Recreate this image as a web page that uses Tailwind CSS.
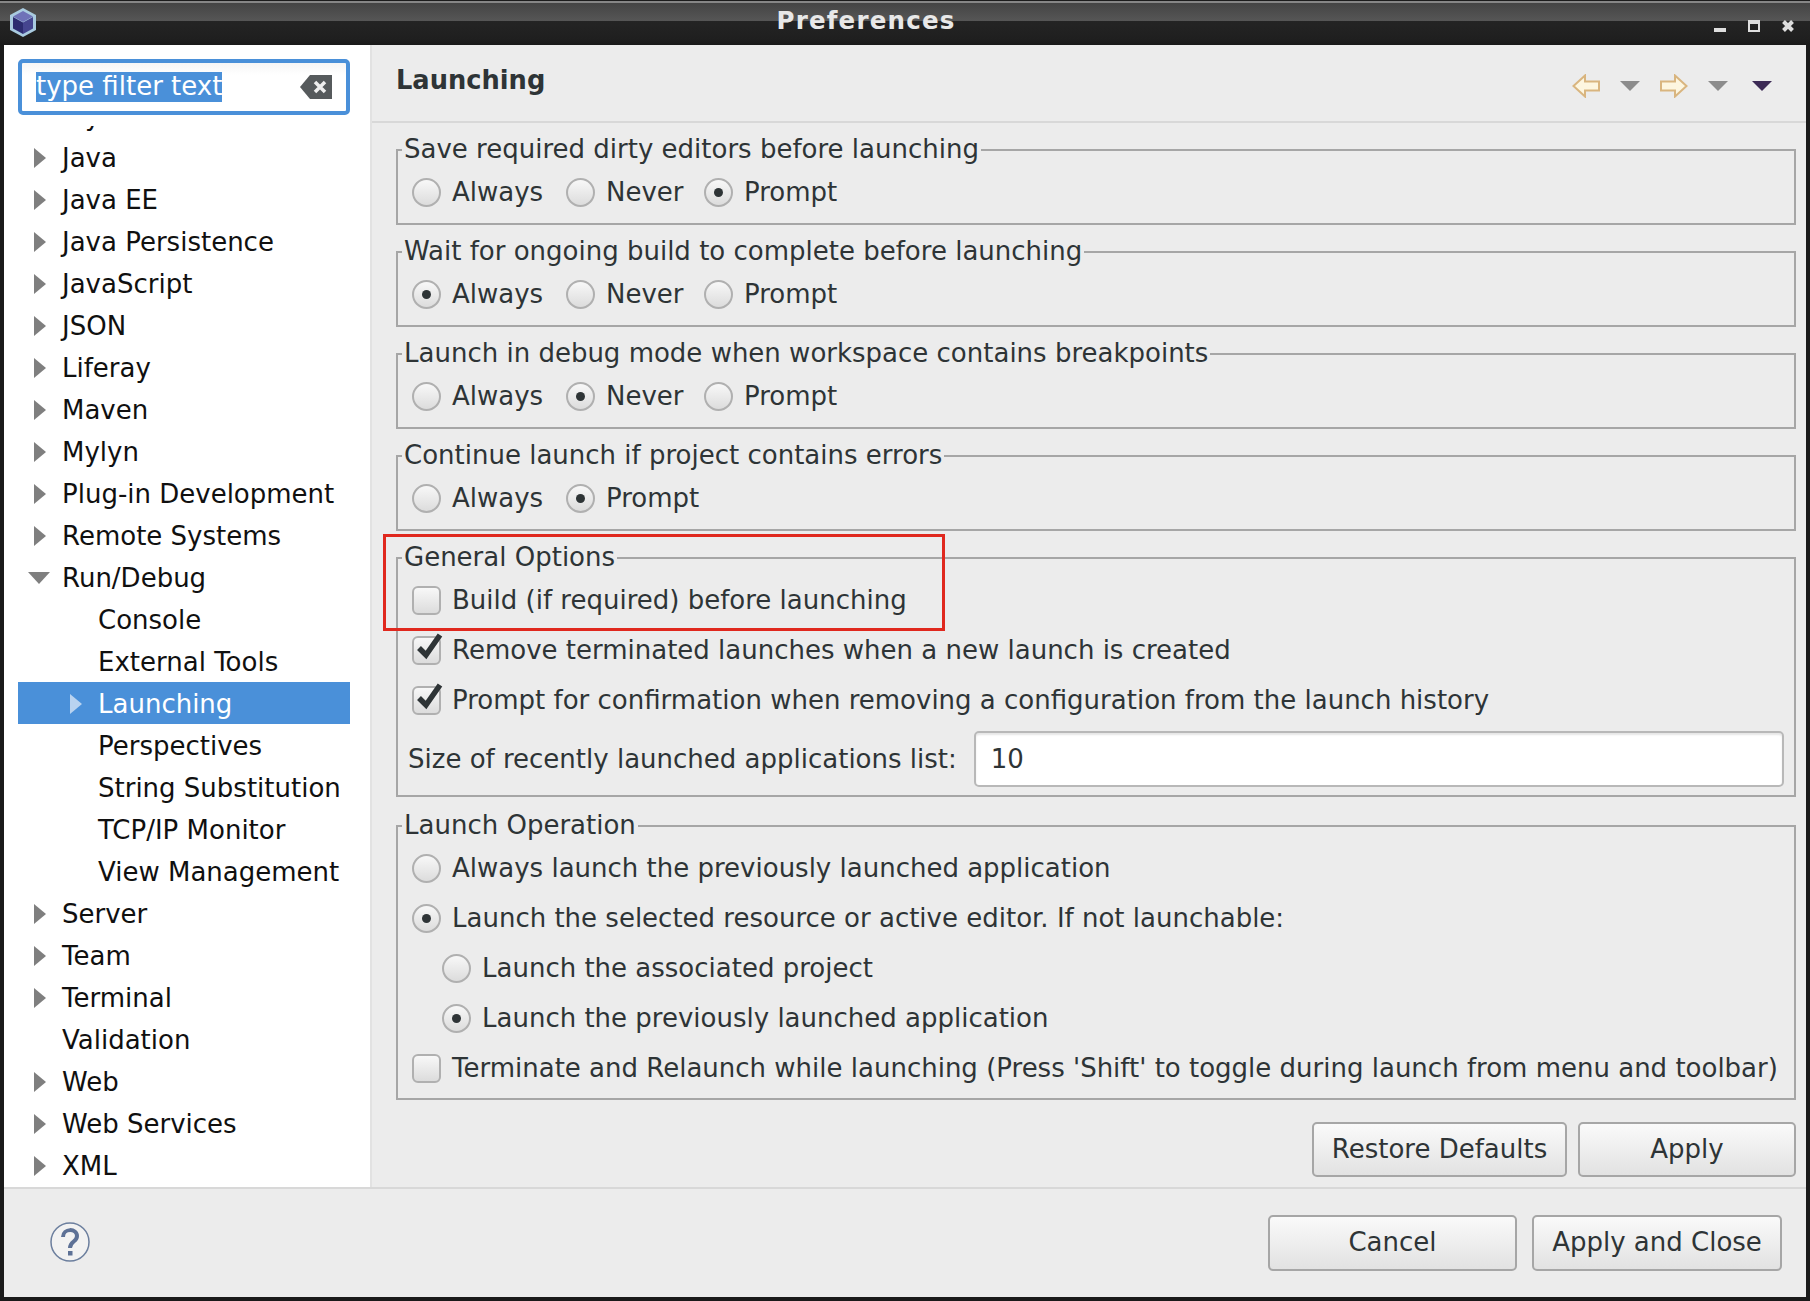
<!DOCTYPE html>
<html lang="en">
<head>
    <meta charset="UTF-8">
    <title>Preferences</title>
    <script src="https://cdn.jsdelivr.net/npm/@tailwindcss/browser@4"></script>
</head>
<body class="bg-[#1a1a1a] font-['DejaVu_Sans',sans-serif] text-[26px] text-[#2e3436] overflow-hidden">
<div class="w-[1810px] h-[1301px] flex flex-col relative">

    <!-- title bar -->
    <div class="h-[45px] grid grid-cols-[1fr_auto_1fr] items-center bg-[linear-gradient(to_bottom,#1c1c1c_0,#1c1c1c_1px,#868686_1px,#868686_3px,#444444_3px,#565656_21px,#242424_21px,#1f1f1f_39px,#191919_45px)]">
        <svg class="ml-[9px]" width="28" height="31" viewBox="0 0 28 31">
            <path d="M14 1 L27 8 V23 L14 30 L1 23 V8 Z" fill="#a9cbe0"/>
            <path d="M14 4 L24 9.5 L14 15 L4 9.5 Z" fill="#6f72b8"/>
            <path d="M4 10 L14 15.5 V27 L4 21.5 Z" fill="#2c2c70"/>
            <path d="M24 10 L14 15.5 V27 L24 21.5 Z" fill="#45458f"/>
        </svg>
        <div class="font-bold text-[24.5px] text-[#e8e8e8] tracking-[1.2px] leading-none -mt-[3px] mr-[78px]">Preferences</div>
        <div class="flex justify-end items-start gap-[22px] pr-[16px] pt-[7px]">
            <div class="w-[12px] h-[12px] flex items-end"><div class="w-[12px] h-[4px] bg-[#dedede]"></div></div>
            <div class="w-[12px] h-[12px] border-2 border-t-[4px] border-[#dedede]"></div>
            <svg width="12" height="12" viewBox="0 0 12 12"><path d="M1.5 1.5 L10.5 10.5 M10.5 1.5 L1.5 10.5" stroke="#dedede" stroke-width="4"/></svg>
        </div>
    </div>

    <div class="flex-1 mx-[4px] flex flex-col bg-[#ececec]">
        <div class="h-[1142px] flex">

            <!-- sidebar -->
            <div class="w-[366px] bg-white flex flex-col text-[#101010]">
                <div class="h-[81px] shrink-0 pl-[14px] pt-[14px]">
                    <div class="w-[332px] h-[56px] border-[4px] border-[#4a90d9] rounded-[5px] bg-linear-to-b from-[#f6f6f6] to-white to-[25%] flex items-center pl-[14px] pr-[14px] justify-between">
                        <span class="bg-[#4a90d9] text-white h-[30px] leading-[29px]">type filter text</span>
                        <svg width="32" height="24" viewBox="0 0 32 24"><path d="M0 12 L10 0 H32 V24 H10 Z" fill="#565a5c"/><path d="M15 7 L25 17 M25 7 L15 17" stroke="#eeeeee" stroke-width="3.5"/></svg>
                    </div>
                </div>
                <div class="flex-1 overflow-hidden pl-[14px] pr-[20px]">
                    <div class="-mt-[32px]">
                        <div class="h-[42px] pt-[2px] flex items-center pl-[16px]"><i class="w-[12px] mr-[16px] h-0 border-y-[10px] border-l-[12px] border-y-transparent border-l-[#7f7f7f]"></i>Ivy</div>
                        <div class="h-[42px] pt-[2px] flex items-center pl-[16px]"><i class="w-[12px] mr-[16px] h-0 border-y-[10px] border-l-[12px] border-y-transparent border-l-[#7f7f7f]"></i>Java</div>
                        <div class="h-[42px] pt-[2px] flex items-center pl-[16px]"><i class="w-[12px] mr-[16px] h-0 border-y-[10px] border-l-[12px] border-y-transparent border-l-[#7f7f7f]"></i>Java EE</div>
                        <div class="h-[42px] pt-[2px] flex items-center pl-[16px]"><i class="w-[12px] mr-[16px] h-0 border-y-[10px] border-l-[12px] border-y-transparent border-l-[#7f7f7f]"></i>Java Persistence</div>
                        <div class="h-[42px] pt-[2px] flex items-center pl-[16px]"><i class="w-[12px] mr-[16px] h-0 border-y-[10px] border-l-[12px] border-y-transparent border-l-[#7f7f7f]"></i>JavaScript</div>
                        <div class="h-[42px] pt-[2px] flex items-center pl-[16px]"><i class="w-[12px] mr-[16px] h-0 border-y-[10px] border-l-[12px] border-y-transparent border-l-[#7f7f7f]"></i>JSON</div>
                        <div class="h-[42px] pt-[2px] flex items-center pl-[16px]"><i class="w-[12px] mr-[16px] h-0 border-y-[10px] border-l-[12px] border-y-transparent border-l-[#7f7f7f]"></i>Liferay</div>
                        <div class="h-[42px] pt-[2px] flex items-center pl-[16px]"><i class="w-[12px] mr-[16px] h-0 border-y-[10px] border-l-[12px] border-y-transparent border-l-[#7f7f7f]"></i>Maven</div>
                        <div class="h-[42px] pt-[2px] flex items-center pl-[16px]"><i class="w-[12px] mr-[16px] h-0 border-y-[10px] border-l-[12px] border-y-transparent border-l-[#7f7f7f]"></i>Mylyn</div>
                        <div class="h-[42px] pt-[2px] flex items-center pl-[16px]"><i class="w-[12px] mr-[16px] h-0 border-y-[10px] border-l-[12px] border-y-transparent border-l-[#7f7f7f]"></i>Plug-in Development</div>
                        <div class="h-[42px] pt-[2px] flex items-center pl-[16px]"><i class="w-[12px] mr-[16px] h-0 border-y-[10px] border-l-[12px] border-y-transparent border-l-[#7f7f7f]"></i>Remote Systems</div>
                        <div class="h-[42px] pt-[2px] flex items-center pl-[10px]"><i class="w-[22px] mr-[12px] h-0 border-x-[11px] border-t-[12px] border-x-transparent border-t-[#7f7f7f]"></i>Run/Debug</div>
                        <div class="h-[42px] pt-[2px] flex items-center pl-[80px]">Console</div>
                        <div class="h-[42px] pt-[2px] flex items-center pl-[80px]">External Tools</div>
                        <div class="h-[42px] pt-[2px] flex items-center pl-[52px] bg-[#4a90d9] text-white"><i class="w-[12px] mr-[16px] h-0 border-y-[10px] border-l-[12px] border-y-transparent border-l-[#b9d3f0]"></i>Launching</div>
                        <div class="h-[42px] pt-[2px] flex items-center pl-[80px]">Perspectives</div>
                        <div class="h-[42px] pt-[2px] flex items-center pl-[80px]">String Substitution</div>
                        <div class="h-[42px] pt-[2px] flex items-center pl-[80px]">TCP/IP Monitor</div>
                        <div class="h-[42px] pt-[2px] flex items-center pl-[80px]">View Management</div>
                        <div class="h-[42px] pt-[2px] flex items-center pl-[16px]"><i class="w-[12px] mr-[16px] h-0 border-y-[10px] border-l-[12px] border-y-transparent border-l-[#7f7f7f]"></i>Server</div>
                        <div class="h-[42px] pt-[2px] flex items-center pl-[16px]"><i class="w-[12px] mr-[16px] h-0 border-y-[10px] border-l-[12px] border-y-transparent border-l-[#7f7f7f]"></i>Team</div>
                        <div class="h-[42px] pt-[2px] flex items-center pl-[16px]"><i class="w-[12px] mr-[16px] h-0 border-y-[10px] border-l-[12px] border-y-transparent border-l-[#7f7f7f]"></i>Terminal</div>
                        <div class="h-[42px] pt-[2px] flex items-center pl-[44px]">Validation</div>
                        <div class="h-[42px] pt-[2px] flex items-center pl-[16px]"><i class="w-[12px] mr-[16px] h-0 border-y-[10px] border-l-[12px] border-y-transparent border-l-[#7f7f7f]"></i>Web</div>
                        <div class="h-[42px] pt-[2px] flex items-center pl-[16px]"><i class="w-[12px] mr-[16px] h-0 border-y-[10px] border-l-[12px] border-y-transparent border-l-[#7f7f7f]"></i>Web Services</div>
                        <div class="h-[42px] pt-[2px] flex items-center pl-[16px]"><i class="w-[12px] mr-[16px] h-0 border-y-[10px] border-l-[12px] border-y-transparent border-l-[#7f7f7f]"></i>XML</div>
                    </div>
                </div>
            </div>

            <!-- preference page -->
            <div class="flex-1 flex flex-col border-l-2 border-[#e2e2e2]">
                <div class="h-[78px] shrink-0 border-b-2 border-[#d8d8d8] flex justify-between pl-[24px] pr-[34px]">
                    <div class="font-bold text-[25.7px] pt-[18px] leading-[34px]">Launching</div>
                    <div class="flex items-center gap-[20px] pt-[5px]">
                        <svg width="28" height="24" viewBox="0 0 28 24"><path d="M1.5 12 L13 1.5 V7.5 H27 V16.5 H13 V22.5 Z" fill="#fdf6e0" stroke="#d9b57f" stroke-width="2"/></svg>
                        <i class="w-0 h-0 border-x-[10px] border-t-[10px] border-x-transparent border-t-[#8c8c8c]"></i>
                        <svg width="28" height="24" viewBox="0 0 28 24"><path d="M26.5 12 L15 1.5 V7.5 H1 V16.5 H15 V22.5 Z" fill="#fdf6e0" stroke="#d9b57f" stroke-width="2"/></svg>
                        <i class="w-0 h-0 border-x-[10px] border-t-[10px] border-x-transparent border-t-[#8c8c8c]"></i>
                        <i class="ml-[4px] w-0 h-0 border-x-[10px] border-t-[10px] border-x-transparent border-t-[#3c2a55]"></i>
                    </div>
                </div>

                <div class="flex-1 flex flex-col pl-[24px] pr-[10px] pt-[12px]">
                    <fieldset class="h-[90px] border-2 border-[#a6a6a6] pl-[14px] flex">
                        <legend class="-ml-[10px] px-[2px] pb-[2px] leading-[28px]">Save required dirty editors before launching</legend>
                        <div class="flex items-center h-[44px] mt-[5px]">
                            <div class="flex items-center w-[154px]"><i class="w-[29px] h-[29px] rounded-full border-2 border-[#b0b0b0] bg-linear-to-b from-[#f8f8f8] to-[#dcdcdc] mr-[11px]"></i>Always</div>
                            <div class="flex items-center w-[138px]"><i class="w-[29px] h-[29px] rounded-full border-2 border-[#b0b0b0] bg-linear-to-b from-[#f8f8f8] to-[#dcdcdc] mr-[11px]"></i>Never</div>
                            <div class="flex items-center"><i class="w-[29px] h-[29px] rounded-full border-2 border-[#b0b0b0] bg-linear-to-b from-[#f8f8f8] to-[#dcdcdc] mr-[11px] flex items-center justify-center"><b class="w-[9px] h-[9px] rounded-full bg-[#2e3436]"></b></i>Prompt</div>
                        </div>
                    </fieldset>
                    <fieldset class="mt-[12px] h-[90px] border-2 border-[#a6a6a6] pl-[14px] flex">
                        <legend class="-ml-[10px] px-[2px] pb-[2px] leading-[28px]">Wait for ongoing build to complete before launching</legend>
                        <div class="flex items-center h-[44px] mt-[5px]">
                            <div class="flex items-center w-[154px]"><i class="w-[29px] h-[29px] rounded-full border-2 border-[#b0b0b0] bg-linear-to-b from-[#f8f8f8] to-[#dcdcdc] mr-[11px] flex items-center justify-center"><b class="w-[9px] h-[9px] rounded-full bg-[#2e3436]"></b></i>Always</div>
                            <div class="flex items-center w-[138px]"><i class="w-[29px] h-[29px] rounded-full border-2 border-[#b0b0b0] bg-linear-to-b from-[#f8f8f8] to-[#dcdcdc] mr-[11px]"></i>Never</div>
                            <div class="flex items-center"><i class="w-[29px] h-[29px] rounded-full border-2 border-[#b0b0b0] bg-linear-to-b from-[#f8f8f8] to-[#dcdcdc] mr-[11px]"></i>Prompt</div>
                        </div>
                    </fieldset>
                    <fieldset class="mt-[12px] h-[90px] border-2 border-[#a6a6a6] pl-[14px] flex">
                        <legend class="-ml-[10px] px-[2px] pb-[2px] leading-[28px]">Launch in debug mode when workspace contains breakpoints</legend>
                        <div class="flex items-center h-[44px] mt-[5px]">
                            <div class="flex items-center w-[154px]"><i class="w-[29px] h-[29px] rounded-full border-2 border-[#b0b0b0] bg-linear-to-b from-[#f8f8f8] to-[#dcdcdc] mr-[11px]"></i>Always</div>
                            <div class="flex items-center w-[138px]"><i class="w-[29px] h-[29px] rounded-full border-2 border-[#b0b0b0] bg-linear-to-b from-[#f8f8f8] to-[#dcdcdc] mr-[11px] flex items-center justify-center"><b class="w-[9px] h-[9px] rounded-full bg-[#2e3436]"></b></i>Never</div>
                            <div class="flex items-center"><i class="w-[29px] h-[29px] rounded-full border-2 border-[#b0b0b0] bg-linear-to-b from-[#f8f8f8] to-[#dcdcdc] mr-[11px]"></i>Prompt</div>
                        </div>
                    </fieldset>
                    <fieldset class="mt-[12px] h-[90px] border-2 border-[#a6a6a6] pl-[14px] flex">
                        <legend class="-ml-[10px] px-[2px] pb-[2px] leading-[28px]">Continue launch if project contains errors</legend>
                        <div class="flex items-center h-[44px] mt-[5px]">
                            <div class="flex items-center w-[154px]"><i class="w-[29px] h-[29px] rounded-full border-2 border-[#b0b0b0] bg-linear-to-b from-[#f8f8f8] to-[#dcdcdc] mr-[11px]"></i>Always</div>
                            <div class="flex items-center"><i class="w-[29px] h-[29px] rounded-full border-2 border-[#b0b0b0] bg-linear-to-b from-[#f8f8f8] to-[#dcdcdc] mr-[11px] flex items-center justify-center"><b class="w-[9px] h-[9px] rounded-full bg-[#2e3436]"></b></i>Prompt</div>
                        </div>
                    </fieldset>

                    <fieldset class="mt-[12px] h-[254px] border-2 border-[#a6a6a6] pl-[14px] pr-[10px]">
                        <legend class="-ml-[10px] px-[2px] pb-[2px] leading-[28px]">General Options</legend>
                        <div class="flex items-center h-[50px] mt-[2px]"><i class="w-[29px] h-[29px] rounded-[6px] border-2 border-[#b0b0b0] bg-linear-to-b from-[#f8f8f8] to-[#dcdcdc] mr-[11px]"></i>Build (if required) before launching</div>
                        <div class="flex items-center h-[50px]"><i class="relative w-[29px] h-[29px] rounded-[6px] border-2 border-[#b0b0b0] bg-linear-to-b from-[#f8f8f8] to-[#dcdcdc] mr-[11px]"><svg class="absolute -top-[6px] left-[1px]" width="30" height="30" viewBox="0 0 30 30"><path d="M4 16 L11 23 L25 3" fill="none" stroke="#2e3436" stroke-width="5.5"/></svg></i>Remove terminated launches when a new launch is created</div>
                        <div class="flex items-center h-[50px]"><i class="relative w-[29px] h-[29px] rounded-[6px] border-2 border-[#b0b0b0] bg-linear-to-b from-[#f8f8f8] to-[#dcdcdc] mr-[11px]"><svg class="absolute -top-[6px] left-[1px]" width="30" height="30" viewBox="0 0 30 30"><path d="M4 16 L11 23 L25 3" fill="none" stroke="#2e3436" stroke-width="5.5"/></svg></i>Prompt for confirmation when removing a configuration from the launch history</div>
                        <div class="flex items-center h-[56px] mt-[6px] -ml-[4px] gap-[17px]">
                            <span>Size of recently launched applications list:</span>
                            <div class="flex-1 h-[56px] border-2 border-[#b8b8b8] rounded-[5px] bg-white pl-[15px] leading-[52px] shadow-[inset_0_2px_2px_#e6e6e6]">10</div>
                        </div>
                    </fieldset>

                    <fieldset class="mt-[14px] h-[289px] border-2 border-[#a6a6a6] pl-[14px]">
                        <legend class="-ml-[10px] px-[2px] pb-[2px] leading-[28px]">Launch Operation</legend>
                        <div class="flex items-center h-[50px] mt-[2px]"><i class="w-[29px] h-[29px] rounded-full border-2 border-[#b0b0b0] bg-linear-to-b from-[#f8f8f8] to-[#dcdcdc] mr-[11px]"></i>Always launch the previously launched application</div>
                        <div class="flex items-center h-[50px]"><i class="w-[29px] h-[29px] rounded-full border-2 border-[#b0b0b0] bg-linear-to-b from-[#f8f8f8] to-[#dcdcdc] mr-[11px] flex items-center justify-center"><b class="w-[9px] h-[9px] rounded-full bg-[#2e3436]"></b></i>Launch the selected resource or active editor. If not launchable:</div>
                        <div class="flex items-center h-[50px] pl-[30px]"><i class="w-[29px] h-[29px] rounded-full border-2 border-[#b0b0b0] bg-linear-to-b from-[#f8f8f8] to-[#dcdcdc] mr-[11px]"></i>Launch the associated project</div>
                        <div class="flex items-center h-[50px] pl-[30px]"><i class="w-[29px] h-[29px] rounded-full border-2 border-[#b0b0b0] bg-linear-to-b from-[#f8f8f8] to-[#dcdcdc] mr-[11px] flex items-center justify-center"><b class="w-[9px] h-[9px] rounded-full bg-[#2e3436]"></b></i>Launch the previously launched application</div>
                        <div class="flex items-center h-[50px]"><i class="w-[29px] h-[29px] rounded-[6px] border-2 border-[#b0b0b0] bg-linear-to-b from-[#f8f8f8] to-[#dcdcdc] mr-[11px]"></i>Terminate and Relaunch while launching (Press 'Shift' to toggle during launch from menu and toolbar)</div>
                    </fieldset>

                    <div class="flex justify-end gap-[11px] mt-[22px]">
                        <div class="w-[255px] h-[55px] border-2 border-[#a6a6a6] rounded-[5px] bg-linear-to-b from-[#fafafa] to-[#e2e2e2] flex items-center justify-center">Restore Defaults</div>
                        <div class="w-[218px] h-[55px] border-2 border-[#a6a6a6] rounded-[5px] bg-linear-to-b from-[#fafafa] to-[#e2e2e2] flex items-center justify-center">Apply</div>
                    </div>
                </div>
            </div>
        </div>

        <!-- footer -->
        <div class="flex-1 border-t-2 border-[#d8d8d8] flex items-center justify-between pl-[46px] pr-[24px]">
            <svg class="-mt-[3px]" width="40" height="40" viewBox="0 0 40 40">
                <circle cx="20" cy="20" r="19" fill="#f2f2f2" stroke="#6c7f9e" stroke-width="1.5"/>
                <path d="M13 15 C13 6 27 6 27 14 C27 20 20 19 20 26" fill="none" stroke="#5d7196" stroke-width="4"/>
                <rect x="18" y="29" width="4.5" height="4.5" fill="#5d7196"/>
            </svg>
            <div class="flex gap-[15px] -mt-[1px]">
                <div class="w-[249px] h-[56px] border-2 border-[#a6a6a6] rounded-[5px] bg-linear-to-b from-[#fafafa] to-[#e2e2e2] flex items-center justify-center">Cancel</div>
                <div class="w-[250px] h-[56px] border-2 border-[#a6a6a6] rounded-[5px] bg-linear-to-b from-[#fafafa] to-[#e2e2e2] flex items-center justify-center">Apply and Close</div>
            </div>
        </div>
    </div>
    <div class="h-[4px] shrink-0"></div>

    <!-- annotation box from the screenshot -->
    <div class="absolute left-[383px] top-[534px] w-[562px] h-[97px] border-[3px] border-[#e0281e]"></div>
</div>
</body>
</html>
